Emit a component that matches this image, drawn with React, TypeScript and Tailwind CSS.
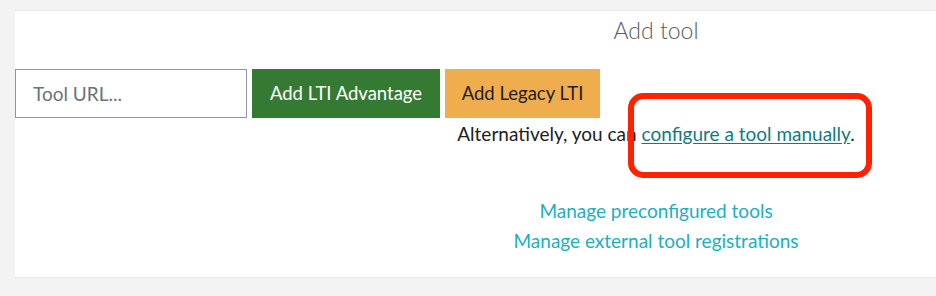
export default function App() {
  return (
    <div className="h-[296px] w-full overflow-hidden bg-[#f3f3f3] pt-[10px] font-['Lato',sans-serif]">
      <div className="relative ml-[15px] h-[268px] w-[1282px] border-y border-[#e9e9e9] bg-white">
        <h2 className="mt-[3px] text-center text-[23px] font-light leading-[32px] text-[#555b60]">Add tool</h2>

        <div className="mt-[23px] flex items-stretch gap-[5px]">
          <input
            className="h-[49px] w-[232px] border-[1.5px] border-[#8f959e] bg-white px-[17px] text-[19px] text-[#1d2125] outline-none placeholder:text-[#6a737b]"
            placeholder="Tool URL..."
          />
          <button className="h-[49px] w-[188px] bg-[#357a32] text-[18.5px] text-white">Add LTI Advantage</button>
          <button className="h-[49px] w-[155px] bg-[#f0ad4e] text-[18.5px] text-[#1d2125]">Add Legacy LTI</button>
        </div>

        <p className="mt-[4px] text-center text-[19px] leading-[24px] text-[#1d2125]">
          Alternatively, you can{" "}
          <a href="#" className="text-[#117a80] underline underline-offset-2">configure a tool manually</a>.
        </p>

        <div className="mt-[50px] flex flex-col items-center text-[19px] leading-[30px] text-[#1aafc3]">
          <a href="#">Manage preconfigured tools</a>
          <a href="#">Manage external tool registrations</a>
        </div>

        {/* red annotation */}
        <div className="pointer-events-none absolute left-[613px] top-[82px] h-[85px] w-[244px] rounded-[15px] border-[6px] border-[#ff2200]" />
      </div>
    </div>
  );
}
